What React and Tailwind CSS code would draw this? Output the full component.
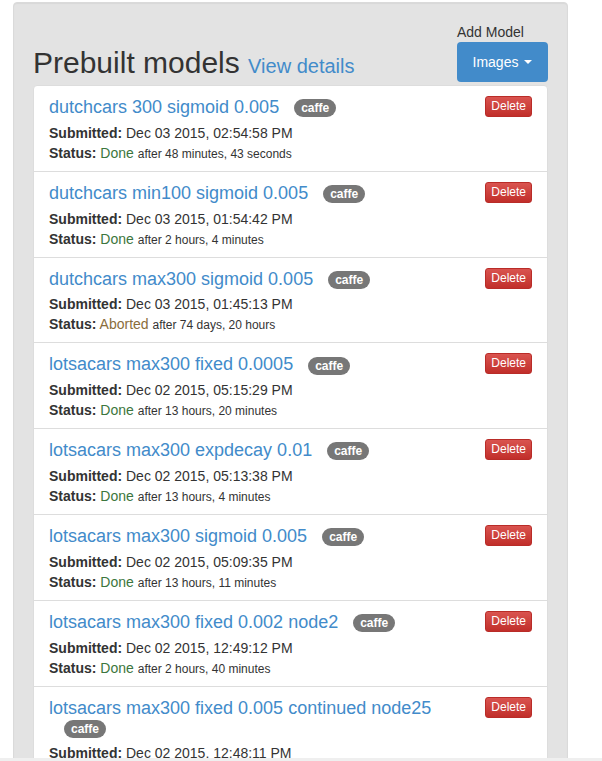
import React from 'react';

const models = [
  { name: 'dutchcars 300 sigmoid 0.005', submitted: 'Dec 03 2015, 02:54:58 PM', status: 'Done', elapsed: 'after 48 minutes, 43 seconds' },
  { name: 'dutchcars min100 sigmoid 0.005', submitted: 'Dec 03 2015, 01:54:42 PM', status: 'Done', elapsed: 'after 2 hours, 4 minutes' },
  { name: 'dutchcars max300 sigmoid 0.005', submitted: 'Dec 03 2015, 01:45:13 PM', status: 'Aborted', elapsed: 'after 74 days, 20 hours' },
  { name: 'lotsacars max300 fixed 0.0005', submitted: 'Dec 02 2015, 05:15:29 PM', status: 'Done', elapsed: 'after 13 hours, 20 minutes' },
  { name: 'lotsacars max300 expdecay 0.01', submitted: 'Dec 02 2015, 05:13:38 PM', status: 'Done', elapsed: 'after 13 hours, 4 minutes' },
  { name: 'lotsacars max300 sigmoid 0.005', submitted: 'Dec 02 2015, 05:09:35 PM', status: 'Done', elapsed: 'after 13 hours, 11 minutes' },
  { name: 'lotsacars max300 fixed 0.002 node2', submitted: 'Dec 02 2015, 12:49:12 PM', status: 'Done', elapsed: 'after 2 hours, 40 minutes' },
  { name: 'lotsacars max300 fixed 0.005 continued node25', submitted: 'Dec 02 2015, 12:48:11 PM', status: 'Done', elapsed: 'after 2 hours, 39 minutes' },
];

const ModelRow = ({ model }) => (
  <div className="px-[15px] pt-[12px] pb-[7px] border-b border-[#dddddd]">
    <button className="float-right ml-[10px] -mt-[2px] h-[21px] px-[5px] text-[12px] leading-[19px] text-white rounded-[3px] border border-[#b92c28] bg-gradient-to-b from-[#d9534f] to-[#c12e2a]">
      Delete
    </button>
    <h4 className="text-[18px] leading-[19.8px] mb-[5px]">
      <a className="text-[#428bca]">{model.name}</a>
      <span className="inline-block ml-[15px] px-[7px] py-[3px] text-[12px] leading-[12px] font-bold text-white bg-[#777777] rounded-[10px] align-middle">
        caffe
      </span>
    </h4>
    <div className="text-[14px] leading-[20px]">
      <b>Submitted:</b> {model.submitted}
    </div>
    <div className="text-[14px] leading-[20px]">
      <b>Status:</b>{' '}
      <span className={model.status === 'Done' ? 'text-[#3c763d]' : 'text-[#8a6d3b]'}>{model.status}</span>{' '}
      <small className="text-[12px]">{model.elapsed}</small>
    </div>
  </div>
);

export default function App() {
  return (
    <div className="h-[761px] flex flex-col bg-white text-[#333333] font-['Liberation_Sans',Arial,sans-serif]">
      <div className="flex-1 overflow-hidden pt-[2px] pl-[13px] w-[568px]">
        <div className="bg-[#e3e3e3] border border-[#dadada] rounded-[4px] px-[19px] pt-[19px] pb-[20px] shadow-[inset_0_1px_1px_rgba(0,0,0,0.05)]">
          <div className="flex items-end justify-between">
            <h2 className="text-[30px] leading-[33px] -mb-[1px]">
              Prebuilt models{' '}
              <small className="text-[20px] text-[#428bca]">View details</small>
            </h2>
            <div className="flex flex-col">
              <div className="text-[14px] leading-[20px]">Add Model</div>
              <button className="h-[40px] w-[91px] rounded-[4px] bg-[#428bca] text-white text-[14px] flex items-center justify-center gap-[6px]">
                Images
                <span className="inline-block w-0 h-0 border-x-[4px] border-x-transparent border-t-[4px] border-t-white"></span>
              </button>
            </div>
          </div>
          <div className="mt-[3px] bg-white border border-[#dddddd] rounded-[4px]">
            {models.map((m) => (
              <ModelRow key={m.name} model={m} />
            ))}
          </div>
        </div>
      </div>
      <div className="h-[3px] bg-[#efefef]"></div>
    </div>
  );
}
